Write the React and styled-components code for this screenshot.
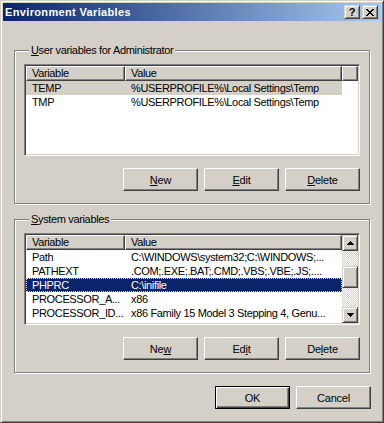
import React from 'react';
import styled, { createGlobalStyle } from 'styled-components';

const GlobalStyle = createGlobalStyle`
  html, body {
    margin: 0;
    padding: 0;
    background: #d4d0c8;
  }
  body {
    font-family: "Liberation Sans", Arial, sans-serif;
    font-size: 11px;
    letter-spacing: -0.35px;
    color: #000;
  }
`;

const St = {
  Window: styled.div`
    width: 384px;
    height: 423px;
    box-sizing: border-box;
    background: #d4d0c8;
    border: 1px solid;
    border-color: #d4d0c8 #404040 #404040 #d4d0c8;
    box-shadow: inset 1px 1px #fff, inset -1px -1px #808080;
    padding: 2px;
    display: flex;
    flex-direction: column;
  `,
  TitleBar: styled.div`
    height: 18px;
    flex: none;
    display: flex;
    align-items: center;
    justify-content: space-between;
    padding: 0 3px 0 2px;
    background: linear-gradient(to right, #0a246a, #a6caf0);
  `,
  Title: styled.div`
    color: #fff;
    font-weight: bold;
    letter-spacing: 0.35px;
    white-space: nowrap;
  `,
  CaptionButtons: styled.div`
    display: flex;
    gap: 2px;
  `,
  CaptionButton: styled.div`
    width: 16px;
    height: 14px;
    box-sizing: border-box;
    background: #d4d0c8;
    border: 1px solid;
    border-color: #d4d0c8 #404040 #404040 #d4d0c8;
    box-shadow: inset 1px 1px #fff, inset -1px -1px #808080;
    display: flex;
    align-items: center;
    justify-content: center;
    font-weight: bold;
    font-size: 11px;
    letter-spacing: 0;
    line-height: 12px;
  `,
  Body: styled.div`
    flex: 1;
    display: flex;
    flex-direction: column;
    padding: 29px 11px 0 11px;
  `,
  Group: styled.div`
    height: 154px;
    box-sizing: border-box;
    margin-top: ${p => p.$top || 0}px;
    border: 1px solid #808080;
    box-shadow: 1px 1px 0 #fff, inset 1px 1px 0 #fff;
    padding: 0 9px;
    display: flex;
    flex-direction: column;
  `,
  Legend: styled.div`
    align-self: flex-start;
    margin: -7px 0 0 5px;
    padding: 0 2px;
    height: 13px;
    line-height: 13px;
    background: #d4d0c8;
    white-space: nowrap;
  `,
  List: styled.div`
    margin-top: 7px;
    height: 92px;
    box-sizing: border-box;
    border: 1px solid;
    border-color: #808080 #fff #fff #808080;
    box-shadow: inset 1px 1px #404040, inset -1px -1px #d4d0c8;
    padding: 1px;
    background: #fff;
    display: flex;
  `,
  ListMain: styled.div`
    flex: 1;
    min-width: 0;
    display: flex;
    flex-direction: column;
    background: #fff;
  `,
  Header: styled.div`
    display: flex;
    height: 15px;
    flex: none;
  `,
  HeaderCell: styled.div`
    width: ${p => (p.$w ? `${p.$w}px` : 'auto')};
    flex: ${p => (p.$w ? 'none' : '1')};
    box-sizing: border-box;
    background: #d4d0c8;
    border: 1px solid;
    border-color: #fff #404040 #404040 #fff;
    box-shadow: inset -1px -1px #808080;
    padding-left: 5px;
    line-height: 12px;
    white-space: nowrap;
    overflow: hidden;
  `,
  Row: styled.div`
    display: flex;
    width: 316px;
    height: 14px;
    line-height: 14px;
    box-sizing: border-box;
    background: ${p => (p.$sel === 'active' ? '#0a246a' : p.$sel === 'inactive' ? '#d4d0c8' : '#fff')};
    color: ${p => (p.$sel === 'active' ? '#fff' : '#000')};
    outline: ${p => (p.$sel === 'active' ? '1px dotted #e9d9a0' : 'none')};
    outline-offset: -1px;
  `,
  Cell: styled.div`
    width: ${p => p.$w}px;
    flex: none;
    box-sizing: border-box;
    padding-left: 6px;
    white-space: nowrap;
    overflow: hidden;
  `,
  ScrollBar: styled.div`
    width: 16px;
    flex: none;
    display: flex;
    flex-direction: column;
  `,
  ScrollButton: styled.div`
    width: 16px;
    height: 16px;
    flex: none;
    box-sizing: border-box;
    background: #d4d0c8;
    border: 1px solid;
    border-color: #d4d0c8 #404040 #404040 #d4d0c8;
    box-shadow: inset 1px 1px #fff, inset -1px -1px #808080;
    display: flex;
    align-items: center;
    justify-content: center;
  `,
  Track: styled.div`
    flex: 1;
    background: repeating-conic-gradient(#fff 0 25%, #d4d0c8 0 50%) 0 0 / 2px 2px;
  `,
  Thumb: styled.div`
    margin-top: 15px;
    height: 22px;
    box-sizing: border-box;
    background: #d4d0c8;
    border: 1px solid;
    border-color: #d4d0c8 #404040 #404040 #d4d0c8;
    box-shadow: inset 1px 1px #fff, inset -1px -1px #808080;
  `,
  ButtonRow: styled.div`
    display: flex;
    justify-content: flex-end;
    gap: 6px;
    margin-top: ${p => p.$top}px;
    margin-right: ${p => p.$right || 0}px;
  `,
  Button: styled.button`
    width: 75px;
    height: 23px;
    box-sizing: border-box;
    padding: 0;
    margin: 0;
    background: #d4d0c8;
    font-family: "Liberation Sans", Arial, sans-serif;
    font-size: 11px;
    letter-spacing: -0.2px;
    color: #000;
    border: 1px solid;
    border-color: ${p => (p.$default ? '#000' : '#fff #404040 #404040 #fff')};
    box-shadow: ${p => (p.$default
      ? 'inset 1px 1px #fff, inset -1px -1px #404040, inset -2px -2px #808080'
      : 'inset -1px -1px #808080')};
    outline: none;
    u { text-decoration: underline; text-underline-offset: 1px; }
  `,
};

const pix = (rows) => rows.flatMap((r, y) => r.map(([x, w]) => (
  <rect key={`${y}-${x}`} x={x} y={y} width={w} height={1} />
)));

const CloseGlyph = () => (
  <svg width="8" height="7" viewBox="0 0 8 7" shapeRendering="crispEdges">
    {pix([[[0, 2], [6, 2]], [[1, 2], [5, 2]], [[2, 4]], [[3, 2]], [[2, 4]], [[1, 2], [5, 2]], [[0, 2], [6, 2]]])}
  </svg>
);

const Arrow = ({ down }) => {
  const rows = [[[3, 1]], [[2, 3]], [[1, 5]], [[0, 7]]];
  return (
    <svg width="7" height="4" viewBox="0 0 7 4" shapeRendering="crispEdges">
      {pix(down ? [...rows].reverse() : rows)}
    </svg>
  );
};

const userVars = [
  { name: 'TEMP', value: '%USERPROFILE%\\Local Settings\\Temp', sel: 'inactive' },
  { name: 'TMP', value: '%USERPROFILE%\\Local Settings\\Temp' },
];

const systemVars = [
  { name: 'Path', value: 'C:\\WINDOWS\\system32;C:\\WINDOWS;...' },
  { name: 'PATHEXT', value: '.COM;.EXE;.BAT;.CMD;.VBS;.VBE;.JS;....' },
  { name: 'PHPRC', value: 'C:\\inifile', sel: 'active' },
  { name: 'PROCESSOR_A...', value: 'x86' },
  { name: 'PROCESSOR_ID...', value: 'x86 Family 15 Model 3 Stepping 4, Genu...' },
];

function VarList({ items, scroll }) {
  return (
    <St.List>
      <St.ListMain>
        <St.Header>
          <St.HeaderCell $w={99}>Variable</St.HeaderCell>
          <St.HeaderCell $w={217}>Value</St.HeaderCell>
          {!scroll && <St.HeaderCell />}
        </St.Header>
        {items.map(it => (
          <St.Row key={it.name} $sel={it.sel}>
            <St.Cell $w={99}>{it.name}</St.Cell>
            <St.Cell $w={217}>{it.value}</St.Cell>
          </St.Row>
        ))}
      </St.ListMain>
      {scroll && (
        <St.ScrollBar>
          <St.ScrollButton><Arrow /></St.ScrollButton>
          <St.Track><St.Thumb /></St.Track>
          <St.ScrollButton><Arrow down /></St.ScrollButton>
        </St.ScrollBar>
      )}
    </St.List>
  );
}

export default function App() {
  return (
    <>
      <GlobalStyle />
      <St.Window>
        <St.TitleBar>
          <St.Title>Environment Variables</St.Title>
          <St.CaptionButtons>
            <St.CaptionButton>?</St.CaptionButton>
            <St.CaptionButton><CloseGlyph /></St.CaptionButton>
          </St.CaptionButtons>
        </St.TitleBar>
        <St.Body>
          <St.Group>
            <St.Legend><u>U</u>ser variables for Administrator</St.Legend>
            <VarList items={userVars} />
            <St.ButtonRow $top={12}>
              <St.Button><u>N</u>ew</St.Button>
              <St.Button><u>E</u>dit</St.Button>
              <St.Button><u>D</u>elete</St.Button>
            </St.ButtonRow>
          </St.Group>
          <St.Group $top={15}>
            <St.Legend><u>S</u>ystem variables</St.Legend>
            <VarList items={systemVars} scroll />
            <St.ButtonRow $top={12}>
              <St.Button>Ne<u>w</u></St.Button>
              <St.Button>Ed<u>i</u>t</St.Button>
              <St.Button>De<u>l</u>ete</St.Button>
            </St.ButtonRow>
          </St.Group>
          <St.ButtonRow $top={13} $right={-1}>
            <St.Button $default>OK</St.Button>
            <St.Button>Cancel</St.Button>
          </St.ButtonRow>
        </St.Body>
      </St.Window>
    </>
  );
}
